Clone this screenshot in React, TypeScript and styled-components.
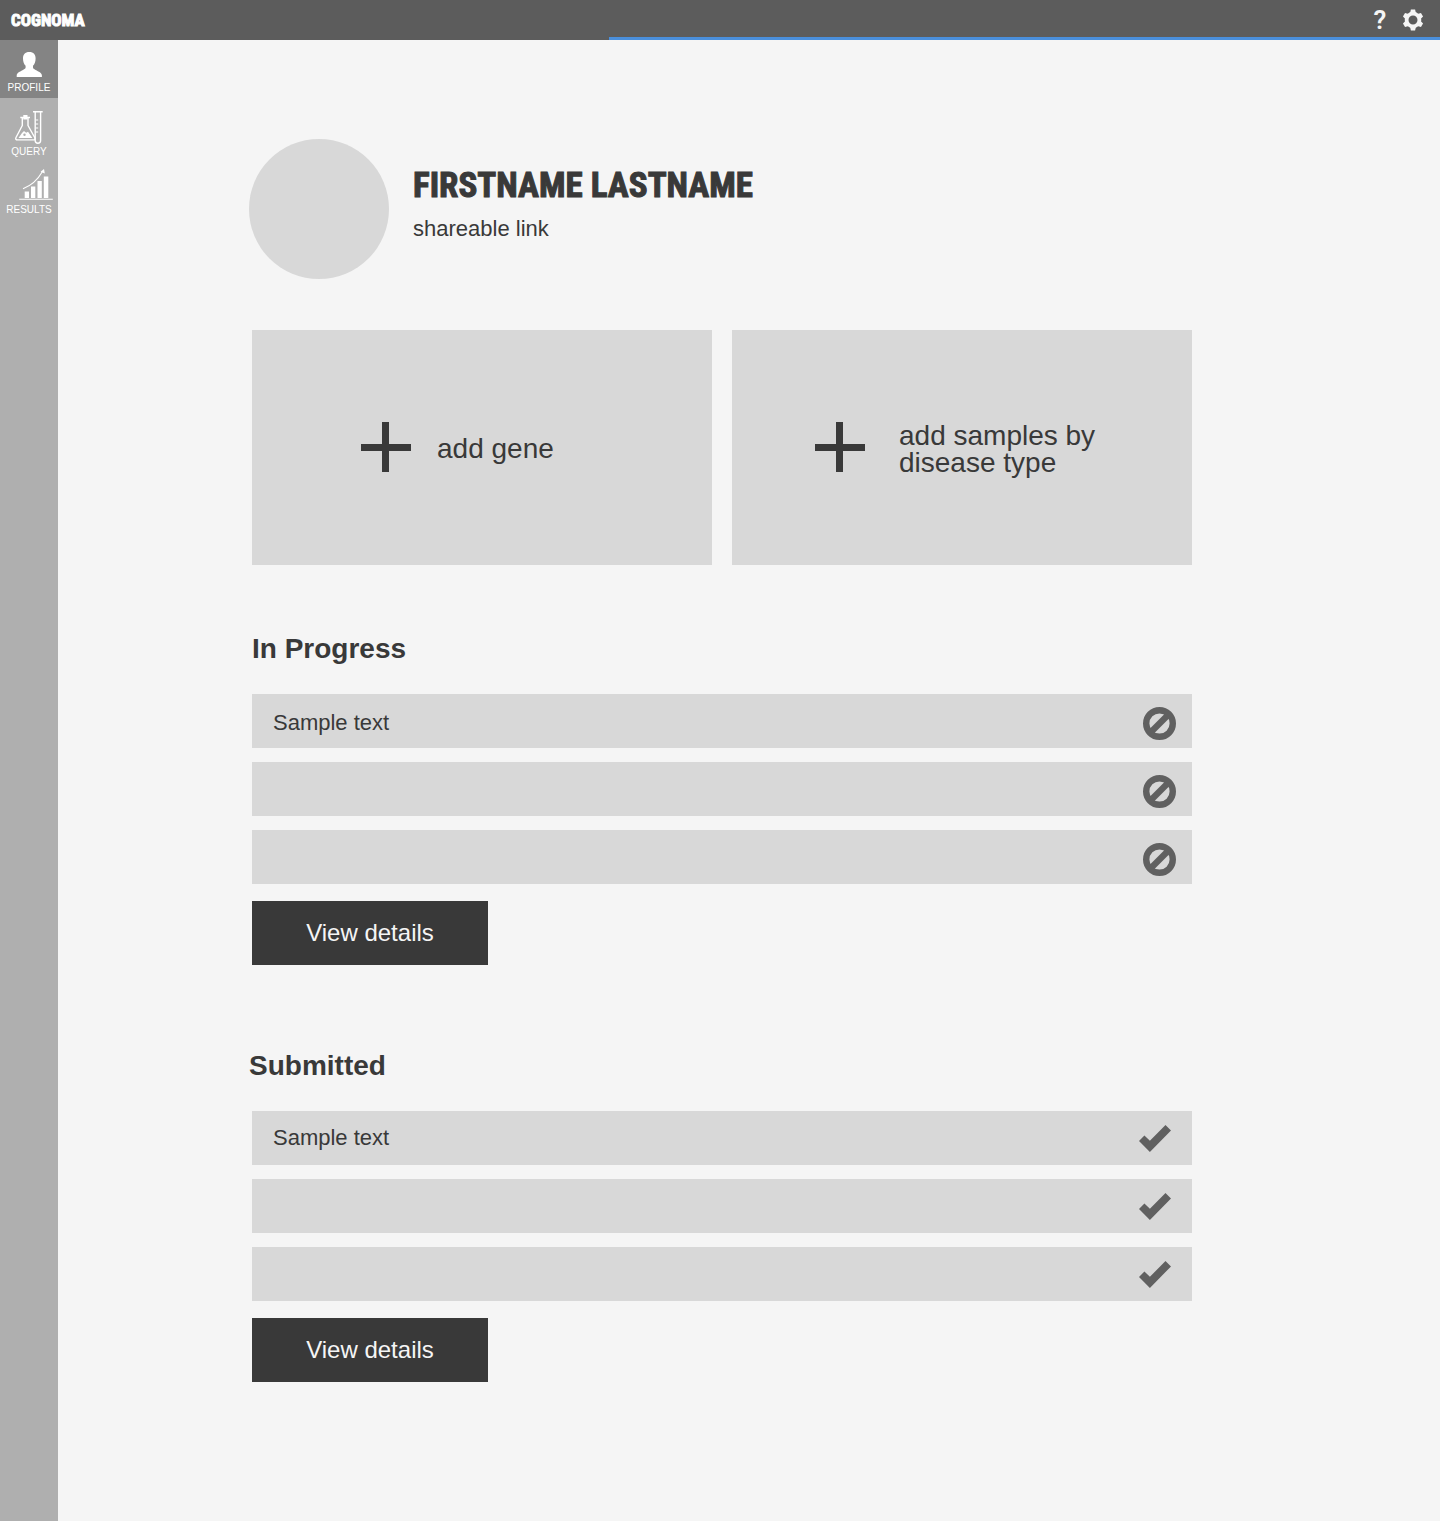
import React from "react";
import styled, { createGlobalStyle, css } from "styled-components";

const sans = `"Helvetica Neue", "Liberation Sans", Arial, sans-serif`;
const condensed = `"Roboto Condensed", "Open Sans Condensed", "Liberation Sans", sans-serif`;

const color = {
  bar: "#5c5c5c",
  accent: "#4a8fdc",
  rail: "#afafaf",
  railActive: "#848484",
  page: "#f5f5f5",
  panel: "#d8d8d8",
  ink: "#393939",
  icon: "#606060",
  light: "#ffffff",
};

const GlobalStyle = createGlobalStyle`
  *, *::before, *::after { box-sizing: border-box; }
  body {
    margin: 0;
    background: ${color.page};
    color: ${color.ink};
    font-family: ${sans};
  }
  h1, h2, p, ul { margin: 0; padding: 0; }
  ul { list-style: none; }
  button { border: 0; padding: 0; font-family: inherit; cursor: pointer; }
  a { color: inherit; text-decoration: none; }
  svg { display: block; flex: none; }
`;

const Shell = styled.div`
  display: flex;
  flex-direction: column;
  min-height: 100vh;
`;

const TopBar = styled.header`
  position: relative;
  display: flex;
  align-items: center;
  justify-content: space-between;
  height: 40px;
  padding: 0 16px 0 11px;
  background: ${color.bar};
  color: ${color.light};
`;

const LoadingLine = styled.div`
  position: absolute;
  right: 0;
  bottom: 0;
  left: 42.3%;
  height: 3px;
  background: ${color.accent};
`;

const Brand = styled.a`
  font-family: ${condensed};
  font-size: 17px;
  font-weight: 700;
  line-height: 20px;
  -webkit-text-stroke: 1px currentColor;
`;

const Tools = styled.div`
  display: flex;
  align-items: center;
  gap: 12px;
`;

const ToolButton = styled.button`
  display: flex;
  align-items: center;
  justify-content: center;
  height: 24px;
  min-width: 20px;
  background: none;
  color: ${color.page};
  font-family: Roboto, sans-serif;
  font-size: 26px;
  font-weight: 600;
  line-height: 26px;
`;

const Body = styled.div`
  display: flex;
  flex: 1;
`;

const Rail = styled.nav`
  flex: none;
  width: 58px;
  background: ${color.rail};
`;

const RailList = styled.ul`
  display: flex;
  flex-direction: column;
`;

const RailItem = styled.li<{ $active?: boolean }>`
  ${(p) =>
    p.$active &&
    css`
      margin-bottom: 6px;
      background: ${color.railActive};
    `}
`;

const RailLink = styled.a`
  display: flex;
  flex-direction: column;
  align-items: center;
  height: 58px;
  color: ${color.light};
  font-size: 10px;
  line-height: 14px;
`;

const Main = styled.main`
  flex: 1;
  min-width: 0;
  padding: 99px 24px 138px 194px;

  @media (max-width: 1100px) {
    padding-left: 48px;
  }
`;

const Column = styled.div`
  max-width: 940px;
`;

const outdent = css`
  margin-left: -3px;
`;

const Profile = styled.section`
  ${outdent}
  display: flex;
  align-items: center;
  gap: 24px;
  margin-bottom: 51px;
`;

const Avatar = styled.div`
  flex: none;
  width: 140px;
  height: 140px;
  border-radius: 50%;
  background: ${color.panel};
`;

const Identity = styled.div`
  display: flex;
  flex-direction: column;
  gap: 7px;
  padding-bottom: 3px;
`;

const Name = styled.h1`
  font-family: ${condensed};
  font-size: 35px;
  font-weight: 700;
  line-height: 36px;
  -webkit-text-stroke: 1px currentColor;
`;

const ShareLink = styled.a`
  font-size: 22px;
  line-height: 36px;
`;

const Actions = styled.div`
  display: grid;
  grid-template-columns: 1fr 1fr;
  gap: 20px;
  margin-bottom: 68px;
`;

const ActionCard = styled.button<{ $inset: number; $gap: number }>`
  display: flex;
  align-items: center;
  gap: ${(p) => p.$gap}px;
  min-height: 235px;
  padding-bottom: 1px;
  padding-left: ${(p) => p.$inset}px;
  background: ${color.panel};
  color: ${color.ink};
  font-size: 28px;
  line-height: 27px;
  text-align: left;
`;

const ActionLabel = styled.span`
  padding-top: 3px;
`;

const Section = styled.section`
  & + & {
    margin-top: 85px;
  }
`;

const SectionTitle = styled.h2<{ $outdent?: boolean }>`
  ${(p) => p.$outdent && outdent}
  margin-bottom: 29px;
  font-size: 28px;
  font-weight: 700;
  line-height: 32px;
`;

const Rows = styled.ul`
  display: flex;
  flex-direction: column;
  gap: 14px;
  margin-bottom: 17px;
`;

const Row = styled.li<{ $kind: Kind }>`
  display: flex;
  align-items: center;
  justify-content: space-between;
  height: 54px;
  padding: ${(p) => (p.$kind === "progress" ? "5px 16px 0 21px" : "1px 21px 0 21px")};
  background: ${color.panel};
  font-size: 22px;
  line-height: 26px;
`;

const RowText = styled.span`
  padding-bottom: 1px;
`;

const RowAction = styled.button`
  background: none;
  color: ${color.icon};
`;

const DetailsButton = styled.button`
  display: block;
  min-width: 236px;
  height: 64px;
  background: ${color.ink};
  color: ${color.page};
  font-size: 24px;
  line-height: 28px;
`;

type Kind = "progress" | "submitted";

const GearIcon = () => (
  <svg width="22" height="22" viewBox="0 0 22 22" aria-hidden="true">
    <circle cx="11" cy="11" r="6.4" fill="none" stroke="currentColor" strokeWidth="3.8" />
    {[0, 60, 120, 180, 240, 300].map((angle) => (
      <path
        key={angle}
        d="M8 4.2 8.9.6h4.2L14 4.2Z"
        fill="currentColor"
        transform={`rotate(${angle} 11 11)`}
      />
    ))}
  </svg>
);

const PersonIcon = () => (
  <svg width="58" height="41" viewBox="0 0 58 41" aria-hidden="true">
    <path
      fill="currentColor"
      d="M29.3 12c4.300 0 6.300 2.600 6.300 6.400 0 3.200-1 6-2.600 7.400v1.800c0 1.200 1 1.600 2.600 2.400 3 1.600 6.300 2.900 6.300 5.400v1.600H16.700v-1.600c0-2.500 3.300-3.800 6.300-5.400 1.600-.8 2.600-1.200 2.600-2.400v-1.800c-1.600-1.400-2.600-4.200-2.600-7.400 0-3.800 2-6.400 6.300-6.400Z"
    />
  </svg>
);

const LabIcon = () => (
  <svg
    width="58"
    height="41"
    viewBox="0 0 58 41"
    fill="none"
    stroke="currentColor"
    strokeWidth="1.4"
    strokeLinejoin="round"
    aria-hidden="true"
  >
    <path d="M22.300 14v7.500L16 33.500c-.8 1.500 0 2.400 1.400 2.400h16c1.400 0 2.100-.9 1.300-2.400L28 21.500V14M20.300 13.500h9.700" />
    <path d="M23.300 11h4.200v4.500h-4.200z" fill="currentColor" stroke="none" />
    <path d="M18.500 34 22 29l2-2 2.200 1.800 1.800-1 4.400 6.200Z" fill="currentColor" stroke="none" />
    <circle cx="24.500" cy="30.800" r="1.200" fill={color.rail} stroke="none" />
    <path d="M33 7.800h9.700M35.200 8v28.500a2.700 2.700 0 0 0 5.400 0V8" />
    <path d="M35.500 16h2.700M35.500 20h2.700M35.500 24h2.700M35.500 28h2.700" strokeWidth="1" />
  </svg>
);

const ChartIcon = () => (
  <svg width="58" height="41" viewBox="0 0 58 41" fill="currentColor" aria-hidden="true">
    <path d="M24.700 29.500h4.300V36h-4.300zM31 24.500h4.300V36H31zM37.500 19h4.300v17h-4.300zM43.800 14.500h4.500V36h-4.500zM19.200 36.700h33.600v1H19.200z" />
    <path d="M23 26.800c8.500-3.300 15-9.500 19.300-17" fill="none" stroke="currentColor" strokeWidth="1.100" />
    <path d="m44 7 .8 4.600-4.200-1.900Z" />
  </svg>
);

const PlusIcon = () => (
  <svg width="50" height="50" viewBox="0 0 50 50" aria-hidden="true">
    <path fill="currentColor" d="M21 0h7v22h22v7H28v21h-7V29H0v-7h21z" />
  </svg>
);

const BanIcon = () => (
  <svg width="33" height="33" viewBox="0 0 33 33" aria-hidden="true">
    <g fill="none" stroke="currentColor" strokeWidth="6.400">
      <circle cx="16.500" cy="16.500" r="13.300" />
      <path d="M7.500 25.500l18-18" />
    </g>
  </svg>
);

const CheckIcon = () => (
  <svg width="32" height="27" viewBox="0 0 32 27" aria-hidden="true">
    <path fill="currentColor" d="M0 16l5.400-5.500 5.500 5.300L26.500 0 32 5.400 10.900 27z" />
  </svg>
);

const navigation = [
  { label: "PROFILE", Icon: PersonIcon, active: true },
  { label: "QUERY", Icon: LabIcon, active: false },
  { label: "RESULTS", Icon: ChartIcon, active: false },
];

const queries = ["Sample text", "", ""];

function QuerySection({ title, kind }: { title: string; kind: Kind }) {
  const submitted = kind === "submitted";
  return (
    <Section>
      <SectionTitle $outdent={submitted}>{title}</SectionTitle>
      <Rows>
        {queries.map((text, index) => (
          <Row key={index} $kind={kind}>
            <RowText>{text}</RowText>
            {submitted ? (
              <RowAction type="button" aria-label="Open">
                <CheckIcon />
              </RowAction>
            ) : (
              <RowAction type="button" aria-label="Cancel">
                <BanIcon />
              </RowAction>
            )}
          </Row>
        ))}
      </Rows>
      <DetailsButton type="button">View details</DetailsButton>
    </Section>
  );
}

export default function App() {
  return (
    <Shell>
      <GlobalStyle />
      <TopBar>
        <Brand href="#">COGNOMA</Brand>
        <Tools>
          <ToolButton type="button" aria-label="Help">
            ?
          </ToolButton>
          <ToolButton type="button" aria-label="Settings">
            <GearIcon />
          </ToolButton>
        </Tools>
        <LoadingLine />
      </TopBar>
      <Body>
        <Rail>
          <RailList>
            {navigation.map(({ label, Icon, active }) => (
              <RailItem key={label} $active={active}>
                <RailLink href="#" aria-current={active ? "page" : undefined}>
                  <Icon />
                  {label}
                </RailLink>
              </RailItem>
            ))}
          </RailList>
        </Rail>
        <Main>
          <Column>
            <Profile>
              <Avatar />
              <Identity>
                <Name>FIRSTNAME LASTNAME</Name>
                <ShareLink href="#">shareable link</ShareLink>
              </Identity>
            </Profile>
            <Actions>
              <ActionCard type="button" $inset={109} $gap={26}>
                <PlusIcon />
                <ActionLabel>add gene</ActionLabel>
              </ActionCard>
              <ActionCard type="button" $inset={83} $gap={34}>
                <PlusIcon />
                <ActionLabel>
                  add samples by
                  <br />
                  disease type
                </ActionLabel>
              </ActionCard>
            </Actions>
            <QuerySection title="In Progress" kind="progress" />
            <QuerySection title="Submitted" kind="submitted" />
          </Column>
        </Main>
      </Body>
    </Shell>
  );
}
